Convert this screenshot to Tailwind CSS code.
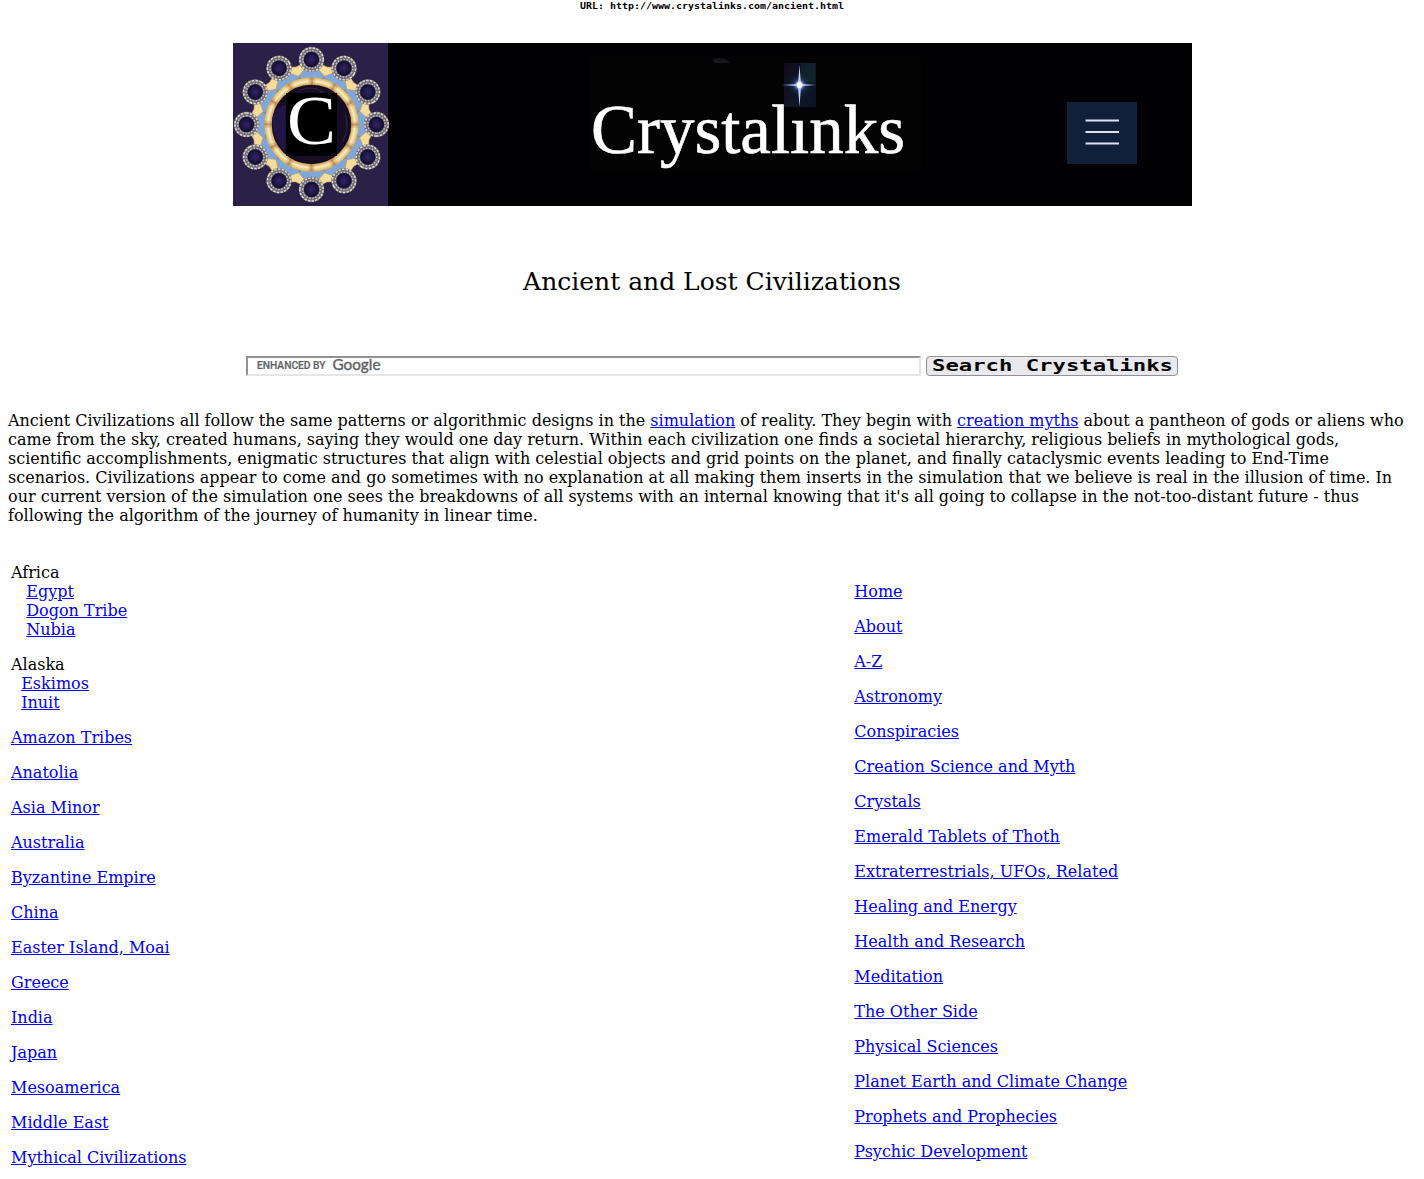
<!DOCTYPE html>
<html lang="en">
<head>
<meta charset="utf-8">
<title>Ancient and Lost Civilizations - Crystalinks</title>
<script src="https://cdn.jsdelivr.net/npm/@tailwindcss/browser@4"></script>
</head>
<body class="bg-white text-black text-[16px] leading-[19px] font-['DejaVu_Serif',serif] h-[1179px] overflow-hidden [&_a]:text-[#0000ee] [&_a]:underline">
<div class="h-[43px] flex justify-center">
  <svg width="266" height="14" viewBox="0 0 266 14"><text x="1" y="9" font-family="DejaVu Sans Mono, monospace" font-weight="bold" font-size="9" textLength="264" lengthAdjust="spacingAndGlyphs">URL: http://www.crystalinks.com/ancient.html</text></svg>
</div>
<header class="w-[959px] h-[163px] ml-[233px] bg-[#010103]">
<svg width="959" height="163" viewBox="0 0 959 163">
  <defs>
    <radialGradient id="night"><stop offset="0" stop-color="#30256b"/><stop offset="1" stop-color="#0c0615"/></radialGradient>
    <radialGradient id="glow"><stop offset="0" stop-color="#fff"/><stop offset=".2" stop-color="#a9c7ff"/><stop offset=".5" stop-color="#2e4a80" stop-opacity=".5"/><stop offset="1" stop-color="#142040" stop-opacity="0"/></radialGradient>
    <radialGradient id="gold" cx="0" cy="0" r="48" gradientUnits="userSpaceOnUse"><stop offset=".82" stop-color="#c99a55"/><stop offset=".9" stop-color="#fdeeb8"/><stop offset="1" stop-color="#cfa25e"/></radialGradient>
    <linearGradient id="sky" x1="0" x2="1" y1="0" y2="1"><stop offset="0" stop-color="#120e22"/><stop offset=".6" stop-color="#141e36"/><stop offset="1" stop-color="#0d1730"/></linearGradient>
    <g id="wedge">
      <path d="M-15 -55L15 -55L13 -46L-13 -46Z" fill="#7ea8db" stroke="#86765a" stroke-width=".5"/>
    </g>
    <g id="petal">
      <path d="M0 -50L-7.500 -55L-6.500 -61L0 -59.500L6.500 -61L7.500 -55Z" transform="rotate(15)" fill="#f5dc9b" stroke="#b99a62" stroke-width=".6"/>
    </g>
    <g id="bead">
      <circle cy="-65" r="10.2" fill="url(#night)" stroke="#716c78" stroke-width="5"/>
      <circle cy="-65" r="11.6" fill="none" stroke="#e6dcb9" stroke-width="1.500" stroke-dasharray="2.400 1.300"/>
      <circle cy="-65" r="8.8" fill="none" stroke="#c4c3d3" stroke-width="1.300" stroke-dasharray="1.500 1.500"/>
    </g>
  </defs>
  <rect width="155" height="163" fill="#2b2047"/>
  <g transform="translate(78.500 81.500)">
    <use href="#wedge"/><use href="#wedge" transform="rotate(30)"/><use href="#wedge" transform="rotate(60)"/><use href="#wedge" transform="rotate(90)"/><use href="#wedge" transform="rotate(120)"/><use href="#wedge" transform="rotate(150)"/><use href="#wedge" transform="rotate(180)"/><use href="#wedge" transform="rotate(210)"/><use href="#wedge" transform="rotate(240)"/><use href="#wedge" transform="rotate(270)"/><use href="#wedge" transform="rotate(300)"/><use href="#wedge" transform="rotate(330)"/>
    <use href="#petal"/><use href="#petal" transform="rotate(30)"/><use href="#petal" transform="rotate(60)"/><use href="#petal" transform="rotate(90)"/><use href="#petal" transform="rotate(120)"/><use href="#petal" transform="rotate(150)"/><use href="#petal" transform="rotate(180)"/><use href="#petal" transform="rotate(210)"/><use href="#petal" transform="rotate(240)"/><use href="#petal" transform="rotate(270)"/><use href="#petal" transform="rotate(300)"/><use href="#petal" transform="rotate(330)"/>
    <use href="#bead"/><use href="#bead" transform="rotate(30)"/><use href="#bead" transform="rotate(60)"/><use href="#bead" transform="rotate(90)"/><use href="#bead" transform="rotate(120)"/><use href="#bead" transform="rotate(150)"/><use href="#bead" transform="rotate(180)"/><use href="#bead" transform="rotate(210)"/><use href="#bead" transform="rotate(240)"/><use href="#bead" transform="rotate(270)"/><use href="#bead" transform="rotate(300)"/><use href="#bead" transform="rotate(330)"/>
    <circle r="43.500" fill="#160d25" stroke="url(#gold)" stroke-width="7.500"/>
    <circle r="43.500" fill="none" stroke="#a8692e" stroke-opacity=".25" stroke-width="7" stroke-dasharray="7 15.780" stroke-dashoffset="3.500"/>
    <circle r="43.500" fill="none" stroke="#8f5521" stroke-opacity=".35" stroke-width="7" stroke-dasharray="2.500 20.280" stroke-dashoffset="1.250"/>
    <path d="M-37 -14Q-43 5 -29 25L-26 25V-20Z" fill="#211747"/>
    <path d="M-12 -34Q0 -40 12 -32M31 17Q38 4 34 -10" fill="none" stroke="#493c56" stroke-width=".6"/>
  </g>
  <rect x="53" y="50" width="51" height="63" fill="#000"/>
  <text x="54" y="101" font-family="Liberation Serif, serif" font-size="70" fill="#fff" textLength="49" lengthAdjust="spacingAndGlyphs">C</text>
  <rect x="356" y="14" width="332" height="115" fill="#030303"/>
  <path d="M479 17q8 -4 15 0l3 3h-15z" fill="#17171c"/>
  <rect x="551" y="20" width="32" height="44" fill="url(#sky)" opacity=".75"/>
  <rect x="568" y="20" width="14" height="19" fill="#123e35" opacity=".35"/>
  <circle cx="566.500" cy="42" r="12" fill="url(#glow)"/>
  <path d="M566.500 22L568 41L583 42L568 43L566.500 64L565 43L549 42L565 41Z" fill="#bdcfff"/>
  <circle cx="566.500" cy="42" r="3" fill="#fff"/>
  <text x="358" y="109.500" font-family="Liberation Serif, serif" font-size="69" fill="#fff" stroke="#fff" stroke-width=".6" textLength="314" lengthAdjust="spacingAndGlyphs">Crystalınks</text>
  <rect x="834" y="59" width="70" height="62" fill="#10203b"/>
  <path d="M852.500 77.500h33.500M852.500 89h33.500M852.500 100.500h33.500" stroke="#dfe2ed" stroke-width="1.800"/>
</svg>
</header>
<h1 class="h-[150px] pt-[60px] text-[25px] leading-[31px] text-center">Ancient and Lost Civilizations</h1>
<form class="flex h-[55px] pl-[246px] gap-[5px] items-start">
  <div class="w-[675px] h-[20px] border-2 border-t-[#929292] border-l-[#929292] border-r-[#e5e5e5] border-b-[#e5e5e5]">
    <svg class="block overflow-visible" width="140" height="16" viewBox="0 0 140 16" fill="#5f6368"><text x="9" y="11" font-family="Roboto, sans-serif" font-weight="500" font-size="10" stroke="#5f6368" stroke-width=".2" textLength="68.500" lengthAdjust="spacingAndGlyphs">ENHANCED BY</text><text x="84.500" y="12" font-family="Lato, sans-serif" font-size="15.500" stroke="#5f6368" stroke-width=".4" textLength="48" lengthAdjust="spacingAndGlyphs">Google</text></svg>
  </div>
  <button type="button" class="w-[252px] h-[20px] border border-[#8f8f9d] rounded-[4px] bg-[#e9e9ed]">
    <svg class="block" width="250" height="18" viewBox="0 0 250 18"><text x="5" y="14" font-family="DejaVu Sans Mono, monospace" font-weight="bold" font-size="15" textLength="241" lengthAdjust="spacingAndGlyphs">Search Crystalinks</text></svg>
  </button>
</form>
<p class="px-2 whitespace-nowrap">Ancient Civilizations all follow the same patterns or algorithmic designs in the <a href="#">simulation</a> of reality. They begin with <a href="#">creation myths</a> about a pantheon of gods or aliens who<br>came from the sky, created humans, saying they would one day return. Within each civilization one finds a societal hierarchy, religious beliefs in mythological gods,<br>scientific accomplishments, enigmatic structures that align with celestial objects and grid points on the planet, and finally cataclysmic events leading to End-Time<br>scenarios. Civilizations appear to come and go sometimes with no explanation at all making them inserts in the simulation that we believe is real in the illusion of time. In<br>our current version of the simulation one sees the breakdowns of all systems with an internal knowing that it's all going to collapse in the not-too-distant future - thus<br>following the algorithm of the journey of humanity in linear time.</p>
<main class="mt-[38px] pl-[11px] grid grid-cols-[843.3px_1fr] items-start">
  <div class="flex flex-col gap-4">
    <p>Africa<br>&nbsp;&nbsp; <a href="#">Egypt</a><br>&nbsp;&nbsp; <a href="#">Dogon Tribe</a><br>&nbsp;&nbsp; <a href="#">Nubia</a></p>
    <p>Alaska<br>&nbsp; <a href="#">Eskimos</a><br>&nbsp; <a href="#">Inuit</a></p>
    <p><a href="#">Amazon Tribes</a></p>
    <p><a href="#">Anatolia</a></p>
    <p><a href="#">Asia Minor</a></p>
    <p><a href="#">Australia</a></p>
    <p><a href="#">Byzantine Empire</a></p>
    <p><a href="#">China</a></p>
    <p><a href="#">Easter Island, Moai</a></p>
    <p><a href="#">Greece</a></p>
    <p><a href="#">India</a></p>
    <p><a href="#">Japan</a></p>
    <p><a href="#">Mesoamerica</a></p>
    <p><a href="#">Middle East</a></p>
    <p><a href="#">Mythical Civilizations</a></p>
  </div>
  <div class="flex flex-col gap-4 pt-[19px]">
    <p><a href="#">Home</a></p>
    <p><a href="#">About</a></p>
    <p><a href="#">A-Z</a></p>
    <p><a href="#">Astronomy</a></p>
    <p><a href="#">Conspiracies</a></p>
    <p><a href="#">Creation Science and Myth</a></p>
    <p><a href="#">Crystals</a></p>
    <p><a href="#">Emerald Tablets of Thoth</a></p>
    <p><a href="#">Extraterrestrials, UFOs, Related</a></p>
    <p><a href="#">Healing and Energy</a></p>
    <p><a href="#">Health and Research</a></p>
    <p><a href="#">Meditation</a></p>
    <p><a href="#">The Other Side</a></p>
    <p><a href="#">Physical Sciences</a></p>
    <p><a href="#">Planet Earth and Climate Change</a></p>
    <p><a href="#">Prophets and Prophecies</a></p>
    <p><a href="#">Psychic Development</a></p>
  </div>
</main>
</body>
</html>
